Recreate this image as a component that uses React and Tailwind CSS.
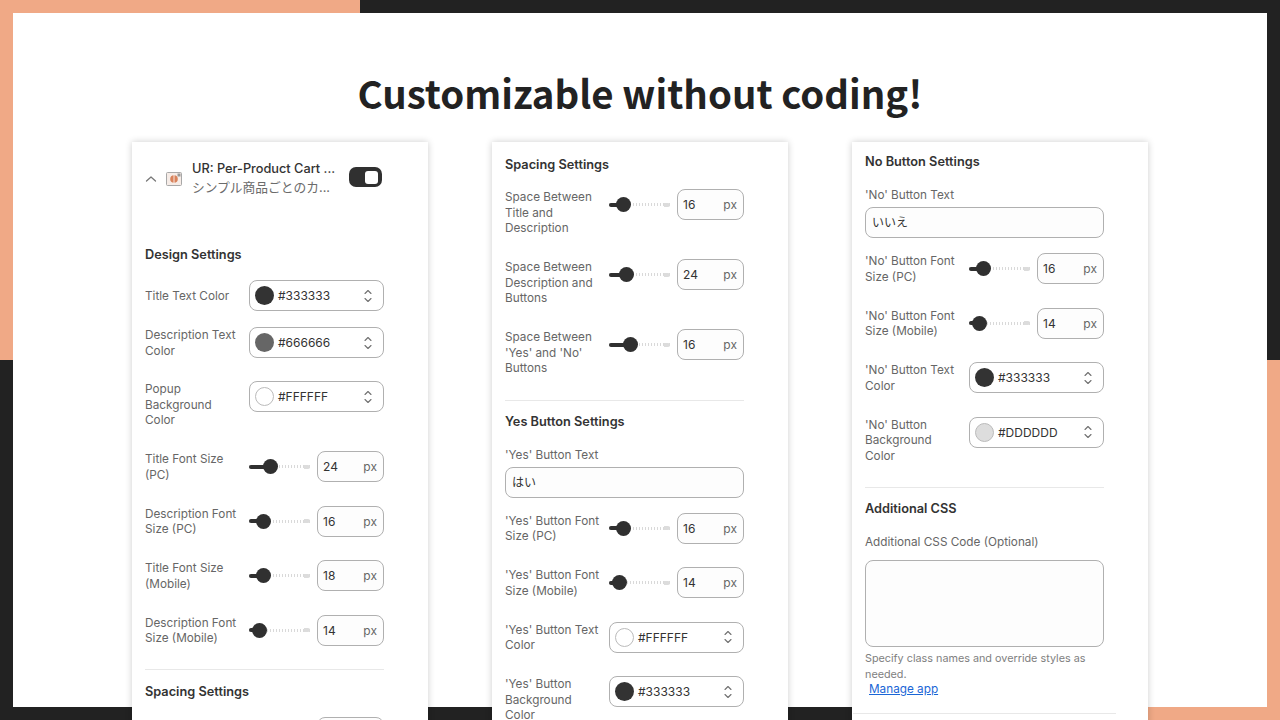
import React from "react";

const Chev = () => (
  <svg width="10" height="16" viewBox="0 0 10 16" fill="none" stroke="#707070" strokeWidth="1.1" strokeLinecap="round" strokeLinejoin="round" className="shrink-0">
    <path d="M2 5.5 5 2.5 8 5.5M2 10.5 5 13.5 8 10.5" />
  </svg>
);

const Row = ({ label, children }) => (
  <div className="flex items-start">
    <div className="flex min-h-[31px] w-[104px] shrink-0 items-center pr-[8px] text-[11.75px] leading-[15.5px] text-[#666666]">
      <span className="translate-y-[1px]">{label}</span>
    </div>
    <div className="flex-1">{children}</div>
  </div>
);

const ColorRow = ({ label, value, sw, border }) => (
  <Row label={label}>
    <div className="flex h-[31px] w-[135px] items-center rounded-[8px] border-[1.25px] border-[#b0b0b0] bg-white pl-[5px] pr-[10px]">
      <span className={`h-[19px] w-[19px] shrink-0 rounded-full ${border ? "border border-[#bbb]" : ""}`} style={{ background: sw }} />
      <span className="ml-[4px] flex-1 pt-[1px] text-[12px] text-[#333333]">{value}</span>
      <Chev />
    </div>
  </Row>
);

const SliderRow = ({ label, value, pos }) => (
  <Row label={label}>
    <div className="flex items-center">
      <div className="relative flex h-[31px] w-[61px] shrink-0 items-center">
        <div className="h-[3px] w-full" style={{ background: "repeating-linear-gradient(90deg,#d9d9d9 0 1.5px,transparent 1.5px 3px)" }} />
        <div className="absolute left-[55px] h-[4px] w-[6px] rounded-r-sm bg-[#dcdcdc]" />
        <div className="absolute left-0 h-[4px] rounded-full bg-[#303030]" style={{ width: pos }} />
        <div className="absolute h-[15px] w-[15px] rounded-full bg-[#303030]" style={{ left: pos - 7.5 }} />
      </div>
      <div className="ml-[7px] flex h-[31px] w-[67px] items-center justify-between rounded-[8px] border-[1.25px] border-[#b0b0b0] bg-[#fdfdfd] pl-[5px] pr-[6px] pt-[1px] text-[12px]">
        <span className="text-[#333333]">{value}</span>
        <span className="text-[#666666]">px</span>
      </div>
    </div>
  </Row>
);

const H = ({ children, cls }) => (
  <div className={`text-[12.75px] leading-[18px] font-semibold text-[#333333] ${cls || ""}`}>{children}</div>
);

const TextRow = ({ label, value }) => (
  <div>
    <div className="text-[11.75px] leading-[16px] text-[#666666]">{label}</div>
    <div className="mt-[4px] flex h-[31px] items-center rounded-[8px] border-[1.25px] border-[#b0b0b0] bg-[#fdfdfd] px-[6px] pt-[1px] text-[12px] text-[#333333]">{value}</div>
  </div>
);

const Divider = ({ cls }) => <div className={`h-px bg-[#e8e8e8] ${cls || ""}`} />;

const Card = ({ children }) => (
  <div className="h-[600px] w-[296px] shrink-0 bg-white px-[13px] shadow-[0_0_7px_rgba(0,0,0,0.2)]">
    <div className="w-[239px]">{children}</div>
  </div>
);

export default function App() {
  return (
    <div className="relative h-[720px] w-[1280px] overflow-hidden bg-[#222222] p-[13px]" style={{ fontFamily: '"Inter","Noto Sans CJK JP",sans-serif' }}>
      <div className="absolute left-0 top-0 h-[360px] w-[360px] bg-[#f0a986]" />
      <div className="absolute bottom-0 right-0 h-[360px] w-[360px] bg-[#f0a986]" />
      <div className="relative h-[694px] w-[1254px] bg-white">
        <h1 className="pt-[53px] text-center text-[38.4px] leading-[52px] font-bold text-[#222222]" style={{ fontFamily: '"Noto Sans CJK JP","Noto Sans",sans-serif' }}>
          Customizable without coding!
        </h1>
        <div className="mt-[24px] flex justify-center gap-[64px]">
          <Card>
            <div className="flex h-[54px] items-start pt-[18px]">
              <svg width="12" height="8" viewBox="0 0 12 8" fill="none" stroke="#777" strokeWidth="1.3" strokeLinecap="round" strokeLinejoin="round" className="ml-0 mt-[15px] shrink-0">
                <path d="M1.5 6 6 2l4.5 4" />
              </svg>
              <svg width="16" height="14" viewBox="0 0 16 14" className="ml-[9px] mt-[12px] shrink-0">
                <rect x="0.5" y="0.5" width="15" height="13" rx="1" fill="#f6ece7" stroke="#a8a8a8" />
                <circle cx="8" cy="7" r="3.8" fill="#d9825b" />
                <path d="M8 3v8" stroke="#fff" strokeWidth="0.8" />
                <rect x="11.5" y="1.5" width="3" height="3" fill="#999" />
              </svg>
              <div className="ml-[10px] w-[157px] shrink-0 whitespace-nowrap">
                <div className="text-[12.75px] leading-[18px] font-medium text-[#333333]">UR: Per-Product Cart ...</div>
                <div className="text-[12.75px] leading-[20px] text-[#6b6b6b]">シンプル商品ごとのカ...</div>
              </div>
              <div className="mt-[7px] flex h-[20px] w-[33px] shrink-0 items-center justify-end rounded-[7px] bg-[#303030] pr-[4px]">
                <span className="h-[13px] w-[13px] rounded-[3px] bg-white" />
              </div>
            </div>
            <H cls="mt-[50px]">Design Settings</H>
            <div className="mt-[16px] flex flex-col">
              <ColorRow label="Title Text Color" value="#333333" sw="#333333" />
              <div className="mt-[16px]"><ColorRow label="Description Text Color" value="#666666" sw="#666666" /></div>
              <div className="mt-[23px]"><ColorRow label="Popup Background Color" value="#FFFFFF" sw="#FFFFFF" border /></div>
              <div className="mt-[23.5px]"><SliderRow label="Title Font Size (PC)" value="24" pos={21} /></div>
              <div className="mt-[23.5px]"><SliderRow label="Description Font Size (PC)" value="16" pos={14} /></div>
              <div className="mt-[23.5px]"><SliderRow label="Title Font Size (Mobile)" value="18" pos={14} /></div>
              <div className="mt-[23.5px]"><SliderRow label="Description Font Size (Mobile)" value="14" pos={10} /></div>
            </div>
            <Divider cls="mt-[23px]" />
            <H cls="mt-[13px]">Spacing Settings</H>
            <div className="mt-[16px]"><SliderRow label="Space Between" value="16" pos={14} /></div>
          </Card>

          <Card>
            <H cls="mt-[14px]">Spacing Settings</H>
            <div className="mt-[15px] flex flex-col gap-[23.5px]">
              <SliderRow label="Space Between Title and Description" value="16" pos={14} />
              <SliderRow label="Space Between Description and Buttons" value="24" pos={17} />
              <SliderRow label="Space Between 'Yes' and 'No' Buttons" value="16" pos={21} />
            </div>
            <Divider cls="mt-[24px]" />
            <H cls="mt-[12px]">Yes Button Settings</H>
            <div className="mt-[16px]"><TextRow label="'Yes' Button Text" value="はい" /></div>
            <div className="mt-[15px] flex flex-col gap-[23.5px]">
              <SliderRow label="'Yes' Button Font Size (PC)" value="16" pos={14} />
              <SliderRow label="'Yes' Button Font Size (Mobile)" value="14" pos={10} />
              <ColorRow label="'Yes' Button Text Color" value="#FFFFFF" sw="#FFFFFF" border />
              <ColorRow label="'Yes' Button Background Color" value="#333333" sw="#333333" />
            </div>
          </Card>

          <Card>
            <H cls="mt-[11px]">No Button Settings</H>
            <div className="mt-[16px]"><TextRow label="'No' Button Text" value="いいえ" /></div>
            <div className="mt-[15px] flex flex-col gap-[23.5px]">
              <SliderRow label="'No' Button Font Size (PC)" value="16" pos={14} />
              <SliderRow label="'No' Button Font Size (Mobile)" value="14" pos={10} />
              <ColorRow label="'No' Button Text Color" value="#333333" sw="#333333" />
              <ColorRow label="'No' Button Background Color" value="#DDDDDD" sw="#DDDDDD" border />
            </div>
            <Divider cls="mt-[24px]" />
            <H cls="mt-[12px]">Additional CSS</H>
            <div className="mt-[16px] text-[11.75px] leading-[16px] text-[#666666]">Additional CSS Code (Optional)</div>
            <div className="mt-[10px] h-[87px] rounded-[8px] border-[1.25px] border-[#b0b0b0] bg-[#fdfdfd]" />
            <div className="mt-[4px] text-[10.8px] leading-[15.5px] text-[#808080]">Specify class names and override styles as needed.</div>
            <div className="pl-[4px] text-[11.75px] leading-[15.5px] text-[#1a66d6] underline">Manage app</div>
            <Divider cls="mt-[15px] -ml-[12px] w-[263px]" />
          </Card>
        </div>
      </div>
    </div>
  );
}
